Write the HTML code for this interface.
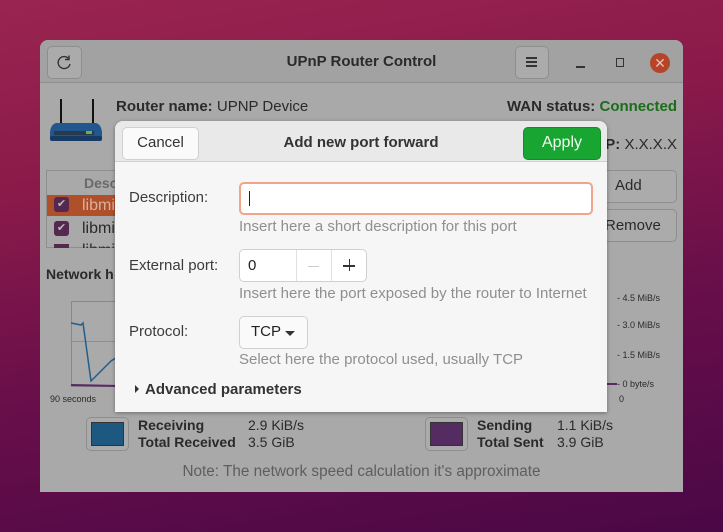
<!DOCTYPE html><html><head><style>
*{box-sizing:border-box;margin:0;padding:0}
body{width:723px;height:532px;overflow:hidden;position:relative;font-family:"Liberation Sans","DejaVu Sans",sans-serif;background:linear-gradient(170deg,#9a2450 0%,#8a1a4a 30%,#6a0f4a 60%,#4a0846 100%);}
.abs{position:absolute}
.win{left:40px;top:40px;width:643px;height:452px;background:#a9a9a9;border-radius:8px 8px 0 0;overflow:hidden}
.hdr{left:0;top:0;width:643px;height:43px;background:#a2a2a2;border-bottom:1px solid #8e8e8e}
.btn{border:1px solid #8e8e8e;border-radius:5px;background:#ababab}
.t{position:absolute;white-space:nowrap;color:#2a2a2a}
.dlg{left:115px;top:121px;width:492px;height:291px;background:#f6f6f6;border-radius:8px 8px 0 0;box-shadow:0 1px 4px rgba(0,0,0,.35);overflow:hidden}
.dh{left:0;top:0;width:492px;height:41px;background:#e9e9e9;border-bottom:1px solid #d0d0d0}
.hint{color:#8f8f8f;font-size:15px}
.lbl{color:#3c3c3c;font-size:15px}
</style></head><body>
<div class="abs win">
 <div class="abs hdr">
  <div class="abs btn" style="left:7px;top:6px;width:35px;height:33px"></div>
  <svg class="abs" style="left:15px;top:14px" width="18" height="18" viewBox="0 0 18 18"><path d="M14 5A6 6 0 1 0 15 10" fill="none" stroke="#333" stroke-width="1.4"/><path d="M14 1.5V5.5H10" fill="none" stroke="#333" stroke-width="1.4"/></svg>
  <div class="t" style="left:0;width:643px;text-align:center;top:13px;font-weight:bold;font-size:15px">UPnP Router Control</div>
  <div class="abs btn" style="left:475px;top:6px;width:34px;height:33px"></div>
  <div class="abs" style="left:486px;top:17px;width:11px;height:1.5px;background:#333;box-shadow:0 4px 0 #333,0 8px 0 #333"></div>
  <div class="abs" style="left:536px;top:26px;width:9px;height:1.5px;background:#333"></div>
  <div class="abs" style="left:576px;top:18px;width:8px;height:9px;border:1.5px solid #333"></div>
  <div class="abs" style="left:610px;top:13px;width:20px;height:20px;border-radius:50%;background:#b5452a;color:#e8c0b4;font-size:14px;text-align:center;line-height:20px">✕</div>
 </div>
 <svg class="abs" style="left:8px;top:56px" width="56" height="52" viewBox="0 0 56 52"><line x1="13" y1="3" x2="13" y2="28" stroke="#111" stroke-width="2"/><line x1="45" y1="3" x2="45" y2="28" stroke="#111" stroke-width="2"/><path d="M8 27 L48 27 Q53 28 54 36 L54 42 L2 42 L2 36 Q3 28 8 27 Z" fill="#24568e"/><rect x="2" y="40" width="52" height="5" rx="2" fill="#163a63"/><rect x="6" y="35" width="40" height="4" fill="#263a4e"/><rect x="38" y="35" width="6" height="3" fill="#7aa84a"/></svg>
 <div class="t" style="left:76px;top:58px;font-size:15px"><b>Router name:</b> UPNP Device</div>
 <div class="t" style="right:6px;top:58px;font-size:15px"><b>WAN status: <span style="color:#1a6d1a">Connected</span></b></div>
 <div class="t" style="right:6px;top:96px;font-size:15px"><b>IP:</b> X.X.X.X</div>
 <div class="abs" style="left:6px;top:130px;width:90px;height:78px;border:1px solid #8e8e8e;background:#a9a9a9"></div>
 <div class="t" style="left:44px;top:135px;color:#6a6a6a;font-weight:bold;font-size:14px">Desc</div>
 <div class="abs" style="left:7px;top:155px;width:88px;height:21px;background:#b0502a"></div>
 <div class="abs" style="left:14px;top:157px;width:15px;height:15px;background:#55284f;border-radius:3px;color:#bbb;font-size:11px;text-align:center;line-height:15px">✔</div>
 <div class="t" style="left:42px;top:157px;font-size:16px;color:#d9b0a0">libmi</div>
 <div class="abs" style="left:14px;top:181px;width:15px;height:15px;background:#55284f;border-radius:3px;color:#bbb;font-size:11px;text-align:center;line-height:15px">✔</div>
 <div class="t" style="left:42px;top:180px;font-size:16px">libmi</div>
 <div class="abs" style="left:14px;top:204px;width:15px;height:4px;background:#55284f"></div>
 <div class="t" style="left:42px;top:202px;font-size:16px;height:6px;overflow:hidden">libmi</div>
 <div class="abs btn" style="left:560px;top:130px;width:77px;height:33px"></div>
 <div class="t" style="left:575px;top:137px;font-size:15px">Add</div>
 <div class="abs btn" style="left:560px;top:169px;width:77px;height:33px"></div>
 <div class="t" style="left:565px;top:177px;font-size:15px">Remove</div>
 <div class="t" style="left:6px;top:226px;font-weight:bold;font-size:14px">Network h</div>
 <div class="abs" style="left:31px;top:261px;width:48px;height:86px;border:1px solid #888;background:#aaa"></div>
 <div class="abs" style="left:31px;top:301px;width:48px;height:1px;background:#8e8e8e"></div>
 <svg class="abs" style="left:31px;top:261px" width="48" height="90"><polyline points="0,22 10,24 12,22 20,80 30,70 40,60 48,55" fill="none" stroke="#245e8a" stroke-width="1.5"/><line x1="0" y1="84" x2="48" y2="85" stroke="#5a2a68" stroke-width="2"/></svg>
 <div class="t" style="left:10px;top:354px;font-size:9px">90 seconds</div>
 <div class="t" style="left:577px;top:253px;font-size:9px">- 4.5 MiB/s</div>
 <div class="t" style="left:577px;top:280px;font-size:9px">- 3.0 MiB/s</div>
 <div class="t" style="left:577px;top:310px;font-size:9px">- 1.5 MiB/s</div>
 <div class="t" style="left:577px;top:339px;font-size:9px">- 0 byte/s</div>
 <div class="t" style="left:579px;top:354px;font-size:9px">0</div>
 <div class="abs" style="left:567px;top:343px;width:10px;height:2px;background:#5a2a68"></div>
 <div class="abs btn" style="left:46px;top:377px;width:43px;height:34px;padding:4px"><div style="width:100%;height:100%;background:#1d5880;border:1px solid #333"></div></div>
 <div class="t" style="left:98px;top:377px;font-size:14px;line-height:17px"><b>Receiving</b><br><b>Total Received</b></div>
 <div class="t" style="left:208px;top:377px;font-size:14px;line-height:17px">2.9 KiB/s<br>3.5 GiB</div>
 <div class="abs btn" style="left:385px;top:377px;width:43px;height:34px;padding:4px"><div style="width:100%;height:100%;background:#552c62;border:1px solid #333"></div></div>
 <div class="t" style="left:437px;top:377px;font-size:14px;line-height:17px"><b>Sending</b><br><b>Total Sent</b></div>
 <div class="t" style="left:517px;top:377px;font-size:14px;line-height:17px">1.1 KiB/s<br>3.9 GiB</div>
 <div class="t" style="left:0;width:643px;text-align:center;top:423px;font-size:15.3px;color:#5e5e5e">Note: The network speed calculation it's approximate</div>
</div>
<div class="abs dlg">
 <div class="abs dh">
  <div class="abs" style="left:7px;top:6px;width:77px;height:33px;background:#fafafa;border:1px solid #d0d0d0;border-radius:5px"></div>
  <div class="t" style="left:7px;width:77px;text-align:center;top:13px;font-size:15px;color:#333">Cancel</div>
  <div class="t" style="left:0;width:492px;text-align:center;top:13px;font-weight:bold;font-size:15px;color:#333">Add new port forward</div>
  <div class="abs" style="left:408px;top:6px;width:78px;height:33px;background:#19a531;border:1px solid #148a28;border-radius:5px"></div>
  <div class="t" style="left:408px;width:78px;text-align:center;top:13px;font-size:16px;color:#f0fff0">Apply</div>
 </div>
 <div class="t lbl" style="left:14px;top:68px">Description:</div>
 <div class="abs" style="left:124px;top:61px;width:354px;height:33px;background:#fff;border:2px solid #f0a58b;border-radius:5px"></div>
 <div class="abs" style="left:134px;top:70px;width:1px;height:15px;background:#222"></div>
 <div class="t hint" style="left:124px;top:97px">Insert here a short description for this port</div>
 <div class="t lbl" style="left:14px;top:136px">External port:</div>
 <div class="abs" style="left:124px;top:128px;width:128px;height:33px;background:#fff;border:1px solid #d0d0d0;border-radius:5px"></div>
 <div class="abs" style="left:181px;top:129px;width:1px;height:31px;background:#e0e0e0"></div>
 <div class="abs" style="left:216px;top:129px;width:1px;height:31px;background:#e0e0e0"></div>
 <div class="t" style="left:133px;top:136px;font-size:15px;color:#222">0</div>
 <div class="abs" style="left:193px;top:145px;width:11px;height:1px;background:#ccc"></div>
 <div class="abs" style="left:228px;top:144px;width:12px;height:1.5px;background:#333"></div>
 <div class="abs" style="left:233.5px;top:138px;width:1.5px;height:12px;background:#333"></div>
 <div class="t hint" style="left:124px;top:164px">Insert here the port exposed by the router to Internet</div>
 <div class="t lbl" style="left:14px;top:202px">Protocol:</div>
 <div class="abs" style="left:124px;top:195px;width:69px;height:33px;background:#fafafa;border:1px solid #d0d0d0;border-radius:5px"></div>
 <div class="t" style="left:136px;top:202px;font-size:15px;color:#222">TCP</div>
 <div class="abs" style="left:170px;top:210px;border-left:5px solid transparent;border-right:5px solid transparent;border-top:5px solid #333"></div>
 <div class="t hint" style="left:124px;top:230px">Select here the protocol used, usually TCP</div>
 <div class="abs" style="left:20px;top:264px;border-top:4px solid transparent;border-bottom:4px solid transparent;border-left:4px solid #333"></div>
 <div class="t" style="left:30px;top:260px;font-weight:bold;font-size:15px;color:#333">Advanced parameters</div>
</div>
</body></html>
